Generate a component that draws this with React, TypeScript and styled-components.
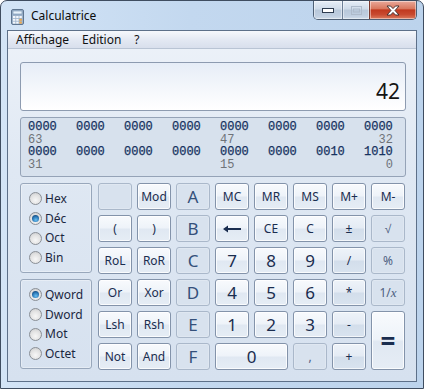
import React from 'react';
import styled, { createGlobalStyle, css } from 'styled-components';

const Global = createGlobalStyle`
  html, body { margin: 0; padding: 0; background: #ffffff; }
  body { font-family: "Noto Sans", "Liberation Sans", sans-serif; }
  * { box-sizing: border-box; }
`;

const Window = styled.div`
  width: 424px;
  height: 389px;
  border: 1px solid #3f4d60;
  border-radius: 7px 7px 0 0;
  background: linear-gradient(90deg, #d3e4f6 0%, #c3d8ef 45%, #bcd3ec 100%);
  display: flex;
  flex-direction: column;
  overflow: hidden;
`;

const TitleBar = styled.div`
  height: 29px;
  display: flex;
  align-items: flex-start;
  flex-shrink: 0;
`;

const TitleIcon = styled.svg`
  margin: 8px 0 0 10px;
  flex-shrink: 0;
`;

const TitleText = styled.span`
  margin: 7px 0 0 7px;
  font-size: 12px;
  line-height: 16px;
  color: #0c0c0c;
  flex: 1;
`;

const WinButtons = styled.div`
  display: flex;
  margin-right: 6px;
  height: 19px;
  border: 1px solid #4f6075;
  border-top: none;
  border-radius: 0 0 5px 5px;
  overflow: hidden;
`;

const WinBtn = styled.div<{ $w: number; $close?: boolean }>`
  width: ${(p) => p.$w}px;
  height: 100%;
  display: flex;
  align-items: center;
  justify-content: center;
  border-left: ${(p) => (p.$close ? '1px solid #7a3a30' : '1px solid #6e8097')};
  &:first-child { border-left: none; }
  background: ${(p) =>
    p.$close
      ? 'linear-gradient(180deg, #e9a99b 0%, #d9785f 42%, #c1391f 50%, #c84a30 75%, #dc7c5e 100%)'
      : 'linear-gradient(180deg, #e6eef7 0%, #cfdbe9 45%, #b8c8da 50%, #bfcee0 80%, #cfdbe9 100%)'};
  box-shadow: inset 0 0 0 1px rgba(255, 255, 255, 0.45);
`;

const Frame = styled.div`
  flex: 1;
  padding: 0 6px 6px 6px;
  display: flex;
`;

const Client = styled.div`
  flex: 1;
  border: 1px solid #5d7089;
  display: flex;
  flex-direction: column;
  background: linear-gradient(180deg, #edf2f9 0%, #dfe8f3 40%, #d6e1ef 100%);
`;

const MenuBar = styled.div`
  height: 18px;
  display: flex;
  align-items: center;
  gap: 13px;
  padding-left: 8px;
  background: linear-gradient(180deg, #f6f8fc 0%, #e4e9f3 50%, #d8dfec 100%);
  border-bottom: 1px solid #b9c4d4;
  flex-shrink: 0;
`;

const MenuItem = styled.span`
  font-size: 12px;
  line-height: 16px;
  color: #111;
`;

const Content = styled.div`
  flex: 1;
  padding: 13px 10px 0 12px;
  display: flex;
  flex-direction: column;
  gap: 6px;
`;

const Display = styled.div`
  height: 49px;
  border: 1px solid #8d9bb0;
  border-radius: 3px;
  background: linear-gradient(180deg, #e6edf7 0%, #f3f6fb 50%, #ffffff 100%);
  display: flex;
  align-items: flex-end;
  justify-content: flex-end;
  padding: 0 5px 7px 0;
`;

const DisplayValue = styled.span`
  font-size: 21px;
  line-height: 24px;
  color: #141414;
`;

const BinPanel = styled.div`
  height: 60px;
  border: 1px solid #95a3b7;
  border-radius: 3px;
  background: #d7e1ed;
  padding: 3px 0 0 7px;
  display: grid;
  grid-template-columns: repeat(7, 48px) 29px;
  grid-auto-rows: 12.5px;
  font-family: "Liberation Mono", "DejaVu Sans Mono", monospace;
  font-size: 12px;
  line-height: 12.5px;
`;

const BinDigits = styled.span`
  color: #163260;
  -webkit-text-stroke: 0.25px #163260;
`;

const BinLabel = styled.span<{ $col: number; $end?: boolean }>`
  color: #6f7378;
  grid-column: ${(p) => p.$col};
  justify-self: ${(p) => (p.$end ? 'end' : 'start')};
`;

const Keypad = styled.div`
  display: flex;
  gap: 6px;
`;

const RadioColumn = styled.div`
  width: 72px;
  display: flex;
  flex-direction: column;
  gap: 6px;
`;

const RadioGroup = styled.div`
  height: 90px;
  border: 1px solid #98a7bb;
  border-radius: 3px;
  box-shadow: inset 0 0 0 1px rgba(255, 255, 255, 0.35);
  padding: 5px 0 0 8px;
  display: flex;
  flex-direction: column;
`;

const RadioRow = styled.div`
  height: 19.7px;
  display: flex;
  align-items: center;
  gap: 3px;
`;

const RadioCircle = styled.span<{ $checked?: boolean }>`
  width: 13px;
  height: 13px;
  border-radius: 50%;
  border: 1px solid #8a8f96;
  background: radial-gradient(circle at 50% 65%, #f7f7f7 0%, #e2e2e2 55%, #c4c6c9 100%);
  display: flex;
  align-items: center;
  justify-content: center;
  ${(p) =>
    p.$checked &&
    css`
      &::after {
        content: '';
        width: 7px;
        height: 7px;
        border-radius: 50%;
        background: radial-gradient(circle at 55% 70%, #6cc0f0 0%, #2a78b8 50%, #0b2e55 100%);
      }
    `}
`;

const RadioLabel = styled.span`
  font-size: 12px;
  line-height: 16px;
  color: #1b2740;
`;

const Grid = styled.div`
  display: grid;
  grid-template-columns: repeat(8, 34px);
  grid-auto-rows: 27px;
  gap: 5px;
`;

type Variant = 'normal' | 'op' | 'disabled';

const Key = styled.div<{ $variant: Variant; $big?: boolean; $faint?: boolean; $span?: number; $rows?: number }>`
  grid-column: span ${(p) => p.$span || 1};
  grid-row: span ${(p) => p.$rows || 1};
  border-radius: 3px;
  display: flex;
  align-items: center;
  justify-content: center;
  font-size: ${(p) => (p.$big ? '17px' : '12px')};
  line-height: 1;
  color: ${(p) => (p.$faint ? '#4d6080' : p.$variant === 'disabled' ? '#34507a' : '#1a2d4f')};
  ${(p) =>
    p.$variant === 'disabled'
      ? css`
          border: 1px solid #aab8ca;
          background: #d8e2ee;
          box-shadow: inset 0 0 0 1px rgba(255, 255, 255, 0.2);
        `
      : p.$variant === 'op'
      ? css`
          border: 1px solid #8393aa;
          background: linear-gradient(180deg, #eef3f9 0%, #e4ebf4 48%, #d3deeb 52%, #d9e3ef 100%);
          box-shadow: inset 0 0 0 1px rgba(255, 255, 255, 0.7);
        `
      : css`
          border: 1px solid #8393aa;
          background: linear-gradient(180deg, #f8fafd 0%, #eef3f9 48%, #e0e8f2 52%, #e6edf5 100%);
          box-shadow: inset 0 0 0 1px rgba(255, 255, 255, 0.8);
        `}
`;

const EqualSign = styled.span`
  font-size: 26px;
  font-weight: bold;
  color: #1a2d4f;
`;

const Italic = styled.span`
  font-family: "Liberation Serif", serif;
  font-style: italic;
  font-size: 13px;
`;

const CalcIcon = () => (
  <TitleIcon width="13" height="16" viewBox="0 0 13 16">
    <rect x="0.5" y="0.5" width="12" height="15" rx="1.5" fill="#9db3cb" stroke="#5f7690" />
    <rect x="2" y="2" width="9" height="3" fill="#e8f3fb" stroke="#7390ad" strokeWidth="0.6" />
    {[0, 1, 2].map((r) =>
      [0, 1, 2].map((c) => (
        <rect
          key={`${r}-${c}`}
          x={2 + c * 3.2}
          y={7 + r * 2.8}
          width="2.4"
          height="2"
          fill={c === 2 && r > 0 ? '#f0a94a' : '#f4f7fb'}
        />
      ))
    )}
  </TitleIcon>
);

const MinIcon = () => (
  <svg width="12" height="6" viewBox="0 0 12 6">
    <rect x="0.5" y="1.5" width="11" height="4" fill="#ffffff" stroke="#2d3b4f" />
  </svg>
);

const MaxIcon = () => (
  <svg width="11" height="9" viewBox="0 0 11 9">
    <rect x="0.5" y="0.5" width="10" height="8" fill="none" stroke="#aebbcb" />
    <rect x="2.5" y="3" width="6" height="3" fill="none" stroke="#aebbcb" />
  </svg>
);

const CloseIcon = () => (
  <svg width="14" height="11" viewBox="0 0 14 11">
    <path
      d="M1 1 L4.5 1 L7 3.6 L9.5 1 L13 1 L9 5.5 L13 10 L9.5 10 L7 7.4 L4.5 10 L1 10 L5 5.5 Z"
      fill="#ffffff"
      stroke="#3a2a2a"
      strokeWidth="0.9"
      strokeLinejoin="round"
    />
  </svg>
);

const BackArrow = () => (
  <svg width="20" height="8" viewBox="0 0 20 8">
    <path d="M1 4 L6 0.5 L6 3 L19 3 L19 5 L6 5 L6 7.5 Z" fill="#1a2d4f" />
  </svg>
);

type KeyDef = { label: React.ReactNode; v?: Variant; big?: boolean; faint?: boolean; span?: number; rows?: number };

const keys: KeyDef[] = [
  { label: '', v: 'disabled' },
  { label: 'Mod' },
  { label: 'A', v: 'disabled', big: true },
  { label: 'MC' },
  { label: 'MR' },
  { label: 'MS' },
  { label: 'M+' },
  { label: 'M-' },

  { label: '(' },
  { label: ')' },
  { label: 'B', v: 'disabled', big: true },
  { label: <BackArrow /> },
  { label: 'CE' },
  { label: 'C' },
  { label: '±', v: 'op' },
  { label: '√', v: 'disabled', faint: true },

  { label: 'RoL' },
  { label: 'RoR' },
  { label: 'C', v: 'disabled', big: true },
  { label: '7', big: true },
  { label: '8', big: true },
  { label: '9', big: true },
  { label: '/', v: 'op' },
  { label: '%', v: 'disabled', faint: true },

  { label: 'Or' },
  { label: 'Xor' },
  { label: 'D', v: 'disabled', big: true },
  { label: '4', big: true },
  { label: '5', big: true },
  { label: '6', big: true },
  { label: '*', v: 'op' },
  { label: <span>1/<Italic>x</Italic></span>, v: 'disabled', faint: true },

  { label: 'Lsh' },
  { label: 'Rsh' },
  { label: 'E', v: 'disabled', big: true },
  { label: '1', big: true },
  { label: '2', big: true },
  { label: '3', big: true },
  { label: '-', v: 'op' },
  { label: <EqualSign>=</EqualSign>, rows: 2 },

  { label: 'Not' },
  { label: 'And' },
  { label: 'F', v: 'disabled', big: true },
  { label: '0', big: true, span: 2 },
  { label: ',', v: 'disabled', faint: true },
  { label: '+', v: 'op' },
];

const bases = [
  { label: 'Hex', checked: false },
  { label: 'Déc', checked: true },
  { label: 'Oct', checked: false },
  { label: 'Bin', checked: false },
];

const sizes = [
  { label: 'Qword', checked: true },
  { label: 'Dword', checked: false },
  { label: 'Mot', checked: false },
  { label: 'Octet', checked: false },
];

const row1 = ['0000', '0000', '0000', '0000', '0000', '0000', '0000', '0000'];
const row2 = ['0000', '0000', '0000', '0000', '0000', '0000', '0010', '1010'];

export default function App() {
  return (
    <>
      <Global />
      <Window>
        <TitleBar>
          <CalcIcon />
          <TitleText>Calculatrice</TitleText>
          <WinButtons>
            <WinBtn $w={28}>
              <MinIcon />
            </WinBtn>
            <WinBtn $w={27}>
              <MaxIcon />
            </WinBtn>
            <WinBtn $w={47} $close>
              <CloseIcon />
            </WinBtn>
          </WinButtons>
        </TitleBar>
        <Frame>
          <Client>
            <MenuBar>
              <MenuItem>Affichage</MenuItem>
              <MenuItem>Edition</MenuItem>
              <MenuItem>?</MenuItem>
            </MenuBar>
            <Content>
              <Display>
                <DisplayValue>42</DisplayValue>
              </Display>
              <BinPanel>
                {row1.map((d, i) => (
                  <BinDigits key={`a${i}`}>{d}</BinDigits>
                ))}
                <BinLabel $col={1}>63</BinLabel>
                <BinLabel $col={5}>47</BinLabel>
                <BinLabel $col={8} $end>
                  32
                </BinLabel>
                {row2.map((d, i) => (
                  <BinDigits key={`b${i}`}>{d}</BinDigits>
                ))}
                <BinLabel $col={1}>31</BinLabel>
                <BinLabel $col={5}>15</BinLabel>
                <BinLabel $col={8} $end>
                  0
                </BinLabel>
              </BinPanel>
              <Keypad>
                <RadioColumn>
                  <RadioGroup>
                    {bases.map((b) => (
                      <RadioRow key={b.label}>
                        <RadioCircle $checked={b.checked} />
                        <RadioLabel>{b.label}</RadioLabel>
                      </RadioRow>
                    ))}
                  </RadioGroup>
                  <RadioGroup>
                    {sizes.map((b) => (
                      <RadioRow key={b.label}>
                        <RadioCircle $checked={b.checked} />
                        <RadioLabel>{b.label}</RadioLabel>
                      </RadioRow>
                    ))}
                  </RadioGroup>
                </RadioColumn>
                <Grid>
                  {keys.map((k, i) => (
                    <Key
                      key={i}
                      $variant={k.v || 'normal'}
                      $big={k.big}
                      $faint={k.faint}
                      $span={k.span}
                      $rows={k.rows}
                    >
                      {k.label}
                    </Key>
                  ))}
                </Grid>
              </Keypad>
            </Content>
          </Client>
        </Frame>
      </Window>
    </>
  );
}
